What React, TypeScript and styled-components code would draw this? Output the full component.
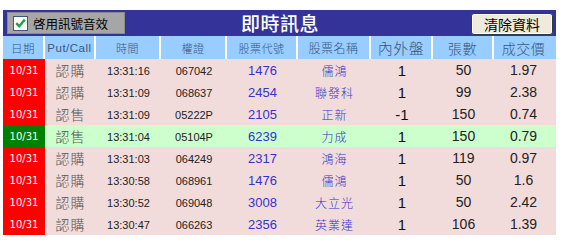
import React from "react";
import styled, { createGlobalStyle } from "styled-components";

const Global = createGlobalStyle`
  html, body { margin: 0; padding: 0; background: #fff; }
  body { font-family: "Liberation Sans", "Noto Sans CJK TC", sans-serif; }
`;

const COLS = "42px 51px 65px 66px 71px 73px 62px 61px 59px";

const Panel = styled.div`
  width: 553px;
  margin: 10px 0 0 3px;
  display: flex;
  flex-direction: column;
`;

const TitleBar = styled.div`
  height: 26px;
  background: #333399;
  display: grid;
  grid-template-columns: 1fr auto 1fr;
  align-items: center;
  padding: 0 3px 0 4px;
`;

const SoundToggle = styled.label`
  justify-self: start;
  width: 118px;
  height: 22px;
  box-sizing: border-box;
  background: #a6a6a6;
  border: 1px solid #8a8a8a;
  display: flex;
  align-items: center;
  gap: 5px;
  padding-left: 5px;
  font-family: "Noto Sans CJK TC", sans-serif;
  font-size: 12.5px;
  font-weight: 400;
  color: #000;
`;

const CheckBox = styled.span`
  width: 15px;
  height: 15px;
  box-sizing: border-box;
  background: #fff;
  border: 1px solid #3b5a7a;
  display: flex;
  align-items: center;
  justify-content: center;
`;

const Title = styled.div`
  font-family: "Noto Sans CJK TC", sans-serif;
  font-size: 19px;
  font-weight: 500;
  color: #fff;
  letter-spacing: 0.5px;
  line-height: 26px;
`;

const ClearButton = styled.button`
  justify-self: end;
  width: 82px;
  height: 22px;
  margin-top: 1px;
  background: #efebdc;
  border: 1px solid #2b3a55;
  border-radius: 3px;
  box-shadow: inset 0 0 0 1px #fbfaf5;
  font-family: "Noto Sans CJK TC", sans-serif;
  font-size: 14px;
  font-weight: 400;
  color: #000;
  padding: 0;
`;

const HeaderRow = styled.div`
  display: grid;
  grid-template-columns: ${COLS};
  height: 23px;
  background: #99ccff;
`;

const HeadCell = styled.div<{ $size: number; $last?: boolean }>`
  display: flex;
  align-items: center;
  justify-content: center;
  font-family: "Liberation Sans", "Noto Sans CJK TC", sans-serif;
  font-size: ${(p) => p.$size}px;
  font-weight: 300;
  color: #36597f;
  letter-spacing: 0.5px;
  border-right: ${(p) => (p.$last ? "none" : "2px solid #fff")};
`;

const Row = styled.div<{ $sell?: boolean }>`
  display: grid;
  grid-template-columns: ${COLS};
  height: 22px;
  background: ${(p) => (p.$sell ? "#ccffcc" : "#f2dcdb")};
`;

const DateCell = styled.div<{ $sell?: boolean }>`
  display: flex;
  align-items: center;
  justify-content: center;
  background: ${(p) => (p.$sell ? "#008000" : "#ff0000")};
  color: #fff;
  font-family: "DejaVu Sans", sans-serif;
  font-size: 10px;
`;

const Cell = styled.div<{ $size: number; $color?: string; $cjk?: boolean; $dy?: number }>`
  display: flex;
  align-items: center;
  justify-content: center;
  font-family: ${(p) =>
    p.$cjk ? `"Noto Sans CJK TC", sans-serif` : `"Liberation Sans", "Noto Sans CJK TC", sans-serif`};
  font-size: ${(p) => p.$size}px;
  font-weight: ${(p) => (p.$cjk ? 300 : 400)};
  letter-spacing: ${(p) => (p.$cjk ? "1px" : "0")};
  color: ${(p) => p.$color ?? "#222"};
  padding-top: ${(p) => p.$dy ?? 0}px;
`;

type Trade = {
  type: string;
  time: string;
  warrant: string;
  code: string;
  name: string;
  side: string;
  qty: string;
  price: string;
};

const trades: Trade[] = [
  { type: "認購", time: "13:31:16", warrant: "067042", code: "1476", name: "儒鴻", side: "1", qty: "50", price: "1.97" },
  { type: "認購", time: "13:31:09", warrant: "068637", code: "2454", name: "聯發科", side: "1", qty: "99", price: "2.38" },
  { type: "認售", time: "13:31:09", warrant: "05222P", code: "2105", name: "正新", side: "-1", qty: "150", price: "0.74" },
  { type: "認售", time: "13:31:04", warrant: "05104P", code: "6239", name: "力成", side: "1", qty: "150", price: "0.79" },
  { type: "認購", time: "13:31:03", warrant: "064249", code: "2317", name: "鴻海", side: "1", qty: "119", price: "0.97" },
  { type: "認購", time: "13:30:58", warrant: "068961", code: "1476", name: "儒鴻", side: "1", qty: "50", price: "1.6" },
  { type: "認購", time: "13:30:52", warrant: "069048", code: "3008", name: "大立光", side: "1", qty: "50", price: "2.42" },
  { type: "認購", time: "13:30:47", warrant: "066263", code: "2356", name: "英業達", side: "1", qty: "106", price: "1.39" },
];

const headers: [string, number][] = [
  ["日期", 11.5],
  ["Put/Call", 11.5],
  ["時間", 11],
  ["權證", 11],
  ["股票代號", 11],
  ["股票名稱", 12],
  ["內外盤", 15],
  ["張數", 14],
  ["成交價", 14],
];

export default function App() {
  return (
    <>
      <Global />
      <Panel>
        <TitleBar>
          <SoundToggle>
            <CheckBox>
              <svg width="11" height="10" viewBox="0 0 11 10">
                <path d="M1.2 5.2 L4.2 8.2 L9.8 1.6" fill="none" stroke="#22a04a" strokeWidth="2.4" />
              </svg>
            </CheckBox>
            啓用訊號音效
          </SoundToggle>
          <Title>即時訊息</Title>
          <ClearButton>清除資料</ClearButton>
        </TitleBar>
        <HeaderRow>
          {headers.map(([h, s], i) => (
            <HeadCell key={h} $size={s} $last={i === headers.length - 1}>
              {h}
            </HeadCell>
          ))}
        </HeaderRow>
        {trades.map((t, i) => {
          const sell = t.warrant === "05104P";
          return (
            <Row key={i} $sell={sell}>
              <DateCell $sell={sell}>10/31</DateCell>
              <Cell $size={14} $cjk $color="#555">{t.type}</Cell>
              <Cell $size={11} $dy={2}>{t.time}</Cell>
              <Cell $size={11} $dy={2}>{t.warrant}</Cell>
              <Cell $size={13} $color="#3333cc">{t.code}</Cell>
              <Cell $size={12} $cjk $color="#3333cc" $dy={1}>{t.name}</Cell>
              <Cell $size={15} $color="#111">{t.side}</Cell>
              <Cell $size={14} $color="#222">{t.qty}</Cell>
              <Cell $size={14} $color="#222">{t.price}</Cell>
            </Row>
          );
        })}
      </Panel>
    </>
  );
}
